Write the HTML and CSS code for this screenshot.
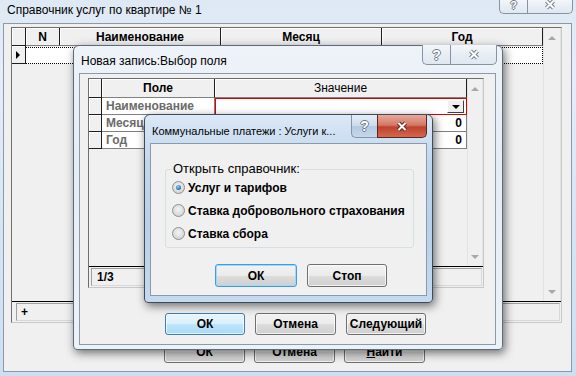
FILE: index.html
```html
<!DOCTYPE html>
<html lang="ru">
<head>
    <meta charset="UTF-8">
    <title>Справочник услуг по квартире № 1</title>
    <link rel="stylesheet" href="styles.css">
</head>
<body>
    <!-- главное окно -->
    <div class="window main-win">
        <div class="caption">
            <span class="caption-text">Справочник услуг по квартире № 1</span>
            <div class="caption-btns">
                <span class="cbtn help">?</span>
                <span class="cbtn close">
                    <svg width="14" height="11" viewBox="0 0 14 11"><path d="M3.5 2 L10.5 9 M10.5 2 L3.5 9" stroke="#76818e" stroke-width="4"/><path d="M3.5 2 L10.5 9 M10.5 2 L3.5 9" stroke="#fff" stroke-width="2"/></svg>
                </span>
            </div>
        </div>
        <div class="client main-client">
            <div class="dbgrid main-grid">
                <div class="grid-area">
                    <div class="grid-cols">
                        <div class="grid-row head">
                            <div class="cell ind"></div>
                            <div class="cell">N</div>
                            <div class="cell">Наименование</div>
                            <div class="cell">Месяц</div>
                            <div class="cell">Год</div>
                        </div>
                        <div class="grid-row data">
                            <div class="cell ind"><span class="arrow"></span></div>
                            <div class="cell focus-row"></div>
                        </div>
                    </div>
                    <div class="vscroll"><span class="up"></span><span class="down"></span></div>
                </div>
                <div class="grid-status"><div class="status-box">+</div></div>
            </div>
            <div class="btn-row main-btns">
                <button class="btn">ОК</button>
                <button class="btn">Отмена</button>
                <button class="btn"><u>Н</u>айти</button>
            </div>
        </div>
    </div>

    <!-- окно выбора поля -->
    <div class="window dialog field-dlg">
        <div class="caption">
            <span class="caption-text">Новая запись:Выбор поля</span>
            <div class="caption-btns">
                <span class="cbtn help">?</span>
                <span class="cbtn close">
                    <svg width="14" height="11" viewBox="0 0 14 11"><path d="M3.5 2 L10.5 9 M10.5 2 L3.5 9" stroke="#76818e" stroke-width="4"/><path d="M3.5 2 L10.5 9 M10.5 2 L3.5 9" stroke="#fff" stroke-width="2"/></svg>
                </span>
            </div>
        </div>
        <div class="client field-client">
            <div class="dbgrid field-grid">
                <div class="grid-area">
                    <div class="grid-cols">
                        <div class="grid-row head">
                            <div class="cell ind"></div>
                            <div class="cell">Поле</div>
                            <div class="cell value-head">Значение</div>
                        </div>
                        <div class="grid-row data">
                            <div class="cell ind"></div>
                            <div class="cell name">Наименование</div>
                            <div class="cell value editing"><span class="combo-btn"></span></div>
                        </div>
                        <div class="grid-row data">
                            <div class="cell ind"></div>
                            <div class="cell name">Месяц</div>
                            <div class="cell value">0</div>
                        </div>
                        <div class="grid-row data">
                            <div class="cell ind"></div>
                            <div class="cell name">Год</div>
                            <div class="cell value">0</div>
                        </div>
                    </div>
                    <div class="vscroll"><span class="up"></span><span class="down"></span></div>
                </div>
                <div class="grid-status"><div class="status-box">1/3</div></div>
            </div>
            <div class="btn-row field-btns">
                <button class="btn default">ОК</button>
                <button class="btn">Отмена</button>
                <button class="btn">Следующий</button>
            </div>
        </div>
    </div>

    <!-- активный диалог -->
    <div class="window dialog kind-dlg">
        <div class="caption">
            <span class="caption-text">Коммунальные платежи : Услуги к...</span>
            <div class="caption-btns">
                <span class="cbtn help">?</span>
                <span class="cbtn close">
                    <svg width="14" height="11" viewBox="0 0 14 11"><path d="M3.5 2 L10.5 9 M10.5 2 L3.5 9" stroke="#5a2a22" stroke-width="4"/><path d="M3.5 2 L10.5 9 M10.5 2 L3.5 9" stroke="#fff" stroke-width="2"/></svg>
                </span>
            </div>
        </div>
        <div class="client kind-client">
            <fieldset class="group">
                <legend>Открыть справочник:</legend>
                <label class="radio-item"><span class="radio checked"></span>Услуг и тарифов</label>
                <label class="radio-item"><span class="radio"></span>Ставка добровольного страхования</label>
                <label class="radio-item"><span class="radio"></span>Ставка сбора</label>
            </fieldset>
            <div class="btn-row kind-btns">
                <button class="btn focused">ОК</button>
                <button class="btn">Стоп</button>
            </div>
        </div>
    </div>
</body>
</html>
```

FILE: styles.css
```css
* {
    box-sizing: border-box;
}
body {
    margin: 0;
    width: 576px;
    height: 376px;
    overflow: hidden;
    position: relative;
    background: #dfe9f4;
    font-family: "Liberation Sans", Arial, sans-serif;
    font-size: 12px;
    color: #000;
}

/* окна */
.window {
    position: absolute;
    display: flex;
    flex-direction: column;
}
.caption {
    position: relative;
    display: flex;
    align-items: center;
    flex: none;
}
.caption-text {
    font-size: 12px;
    white-space: nowrap;
}
.client {
    background: #f0f0f0;
    border: 1px solid #8b9aab;
    flex: 1;
}

.main-win {
    left: 0;
    top: -8px;
    width: 576px;
    height: 384px;
    padding: 0 4px 4px 3px;
    background: linear-gradient(180deg, #dce8f4 0%, #e6eef8 20%, #d7e5f3 60%, #cddff0 100%);
}
.main-win .caption {
    height: 31px;
    padding: 5px 0 0 4px;
}
.main-win .caption-btns {
    top: 8px;
    right: -1px;
}
.main-win .cbtn {
    height: 14px;
    align-items: flex-end;
    padding-bottom: 3px;
}
.main-win .cbtn.help {
    font-size: 11px;
    line-height: 11px;
    padding-bottom: 2px;
}
.main-win .help { width: 28px; }
.main-win .close { width: 46px; }

.dialog {
    border: 1px solid #5d6b7a;
    border-radius: 6px 6px 4px 4px;
    box-shadow: 2px 3px 10px rgba(0, 0, 0, 0.55);
}
.field-dlg {
    left: 73px;
    top: 45px;
    width: 430px;
    height: 305px;
    padding: 0 6px 4px 5px;
    background: linear-gradient(180deg, #eef3f9 0%, #e4ecf6 40%, #edf2f8 100%);
}
.field-dlg .caption {
    height: 27px;
    padding: 2px 0 0 2px;
}
.field-dlg .caption-btns {
    top: -1px;
    right: -1px;
}
.field-dlg .help { width: 28px; }
.field-dlg .close { width: 47px; }

.kind-dlg {
    left: 144px;
    top: 114px;
    width: 289px;
    height: 189px;
    padding: 0 5px 6px 5px;
    border-color: #3d4c5c;
    background: linear-gradient(180deg, #dbe8f6 0%, #c2d7ee 25%, #b8d0ea 60%, #c6daef 100%);
}
.kind-dlg .caption {
    height: 28px;
    padding: 3px 0 0 2px;
}
.kind-dlg .caption-text {
    font-size: 11px;
}
.kind-dlg .caption-btns {
    top: 0;
    right: 0;
}
.kind-dlg .cbtn { height: 23px; }
.kind-dlg .help {
    width: 26px;
    background: linear-gradient(180deg, #e4edf7 0%, #cbdbed 50%, #b4c9e1 51%, #c4d7ec 100%);
}
.kind-dlg .close {
    width: 50px;
    border-color: #5c2620;
    background: linear-gradient(180deg, #e9a99b 0%, #d47967 45%, #c0412c 55%, #d3694f 100%);
}

/* кнопки заголовка */
.caption-btns {
    position: absolute;
    display: flex;
}
.cbtn {
    height: 20px;
    display: flex;
    align-items: center;
    justify-content: center;
    border: 1px solid #8593a2;
    border-top: none;
    background: linear-gradient(180deg, #f3f6fa 0%, #e8eef5 50%, #dfe7f0 100%);
}
.cbtn.help {
    border-radius: 0 0 0 5px;
    border-right: none;
    font-size: 14px;
    font-weight: bold;
    color: #fff;
    text-shadow: 1px 0 #6e7a88, -1px 0 #6e7a88, 0 1px #6e7a88, 0 -1px #6e7a88;
}
.cbtn.close {
    border-radius: 0 0 5px 0;
}

/* таблицы */
.dbgrid {
    border: 1px solid #6e6e6e;
    border-right-color: #c8c8c8;
    border-bottom-color: #c8c8c8;
    display: flex;
    flex-direction: column;
    background: #f0f0f0;
}
.grid-area {
    flex: 1;
    display: flex;
    border-bottom: 1px solid #000;
}
.grid-cols {
    flex: none;
}
.grid-row {
    display: grid;
}
.cell {
    border-right: 1px solid #808080;
    border-bottom: 1px solid #808080;
    white-space: nowrap;
    overflow: hidden;
    display: flex;
    align-items: center;
}
.head .cell {
    justify-content: center;
    font-weight: bold;
    background: #f0f0f0;
    border-right-color: #1e1e1e;
    box-shadow: inset 1px 1px #fff;
}
.cell.ind {
    background: #f0f0f0;
    border-right-color: #1e1e1e;
    border-bottom-color: #1e1e1e;
    box-shadow: inset 1px 1px #fff;
}
.arrow {
    margin-left: 4px;
    width: 0;
    height: 0;
    border-top: 4px solid transparent;
    border-bottom: 4px solid transparent;
    border-left: 4px solid #000;
}
.vscroll {
    flex: 1;
    display: flex;
    flex-direction: column;
    justify-content: space-between;
    align-items: center;
    border-left: 1px solid #e3e3e3;
    border-right: 1px solid #e3e3e3;
    padding: 8px 0 7px;
}
.vscroll span {
    width: 0;
    height: 0;
    border-left: 4px solid transparent;
    border-right: 4px solid transparent;
}
.vscroll .up { border-bottom: 4px solid #a8a8a8; }
.vscroll .down { border-top: 4px solid #a8a8a8; }
.grid-status {
    height: 20px;
    padding: 1px 1px 1px 2px;
}
.status-box {
    height: 100%;
    border: 1px solid #a0a0a0;
    border-right-color: #d8d8d8;
    border-bottom-color: #d8d8d8;
    padding-left: 5px;
    font-weight: bold;
    display: flex;
    align-items: center;
}

.main-client {
    padding: 3px 0 0 7px;
}
.main-grid {
    width: 551px;
    height: 296px;
}
.main-grid .grid-row {
    grid-template-columns: 14px 34px 161px 161px 161px;
    height: 18px;
}
.main-grid .focus-row {
    grid-column: 2 / 6;
    background: #fff;
    border: 1px dotted #000;
    border-left: none;
    margin-top: 1px;
}
.main-grid .status-box {
    margin-left: 2px;
    padding-left: 4px;
}

.field-client {
    padding: 4px 0 0 8px;
}
.field-grid {
    width: 396px;
    height: 210px;
}
.field-grid .grid-row {
    grid-template-columns: 13px 113px 252px;
    height: 17px;
}
.field-grid .grid-row.head {
    height: 19px;
}
.field-grid .value-head {
    font-weight: normal;
}
.field-grid .name {
    background: #fff;
    color: #6b6b6b;
    font-weight: bold;
    padding-left: 4px;
}
.field-grid .value {
    background: #fff;
    font-weight: bold;
    justify-content: flex-end;
    padding-right: 4px;
}
.field-grid .value.editing {
    border: 1px solid #e00000;
    padding-right: 2px;
}
.combo-btn {
    width: 17px;
    height: 13px;
    background: #f0f0f0;
    border: 1px solid #fff;
    border-right-color: #404040;
    border-bottom-color: #404040;
    display: flex;
    align-items: center;
    justify-content: center;
}
.combo-btn::after {
    content: "";
    border-left: 4px solid transparent;
    border-right: 4px solid transparent;
    border-top: 4px solid #000;
}

/* кнопки */
.btn-row {
    display: flex;
    gap: 10px;
}
.btn {
    height: 22px;
    padding: 0;
    font-family: "Liberation Sans", Arial, sans-serif;
    font-size: 12px;
    font-weight: bold;
    color: #000;
    border: 1px solid #707070;
    border-radius: 3px;
    background: linear-gradient(180deg, #f2f2f2 0%, #ebebeb 50%, #dddddd 51%, #cfcfcf 100%);
    box-shadow: inset 0 0 0 1px rgba(255, 255, 255, 0.7);
}
.btn.default {
    border-color: #3c7fb1;
    background: linear-gradient(180deg, #eaf6fd 0%, #d9f0fc 50%, #bee6fd 51%, #a7d9f5 100%);
}
.btn.focused {
    border-color: #3c9ee0;
    box-shadow: inset 0 0 0 1px #9fd8f8;
}
.main-btns {
    margin-top: 18px;
    padding-left: 153px;
    gap: 9px;
}
.main-btns .btn { width: 81px; }
.field-btns {
    margin-top: 25px;
    padding-left: 77px;
}
.field-btns .btn { width: 80px; }
.field-btns .btn:nth-child(2) { width: 81px; }

.kind-client {
    padding: 18px 0 0 14px;
}
.group {
    width: 249px;
    height: 86px;
    margin: 0;
    padding: 0 0 0 6px;
    border: 1px solid #d5dfe5;
    border-radius: 3px;
}
.group legend {
    padding: 0 1px;
    font-size: 13px;
    line-height: 14px;
}
.radio-item {
    height: 23px;
    display: flex;
    align-items: center;
    gap: 3px;
    font-weight: bold;
    white-space: nowrap;
}
.radio {
    width: 13px;
    height: 13px;
    border-radius: 50%;
    border: 1px solid #8e8f8f;
    background: radial-gradient(circle at 50% 40%, #f4f4f4 0%, #dcdcdc 60%, #c8c8c8 100%);
    display: flex;
    align-items: center;
    justify-content: center;
}
.radio.checked::after {
    content: "";
    width: 5px;
    height: 5px;
    border-radius: 50%;
    background: radial-gradient(circle at 40% 35%, #8ad0f7 0%, #2a7fc0 60%, #1b4f80 100%);
}
.kind-btns {
    margin-top: 16px;
    padding-left: 50px;
}
.kind-btns .btn {
    height: 23px;
    width: 82px;
}
.kind-btns .btn:nth-child(2) { width: 80px; }
```
